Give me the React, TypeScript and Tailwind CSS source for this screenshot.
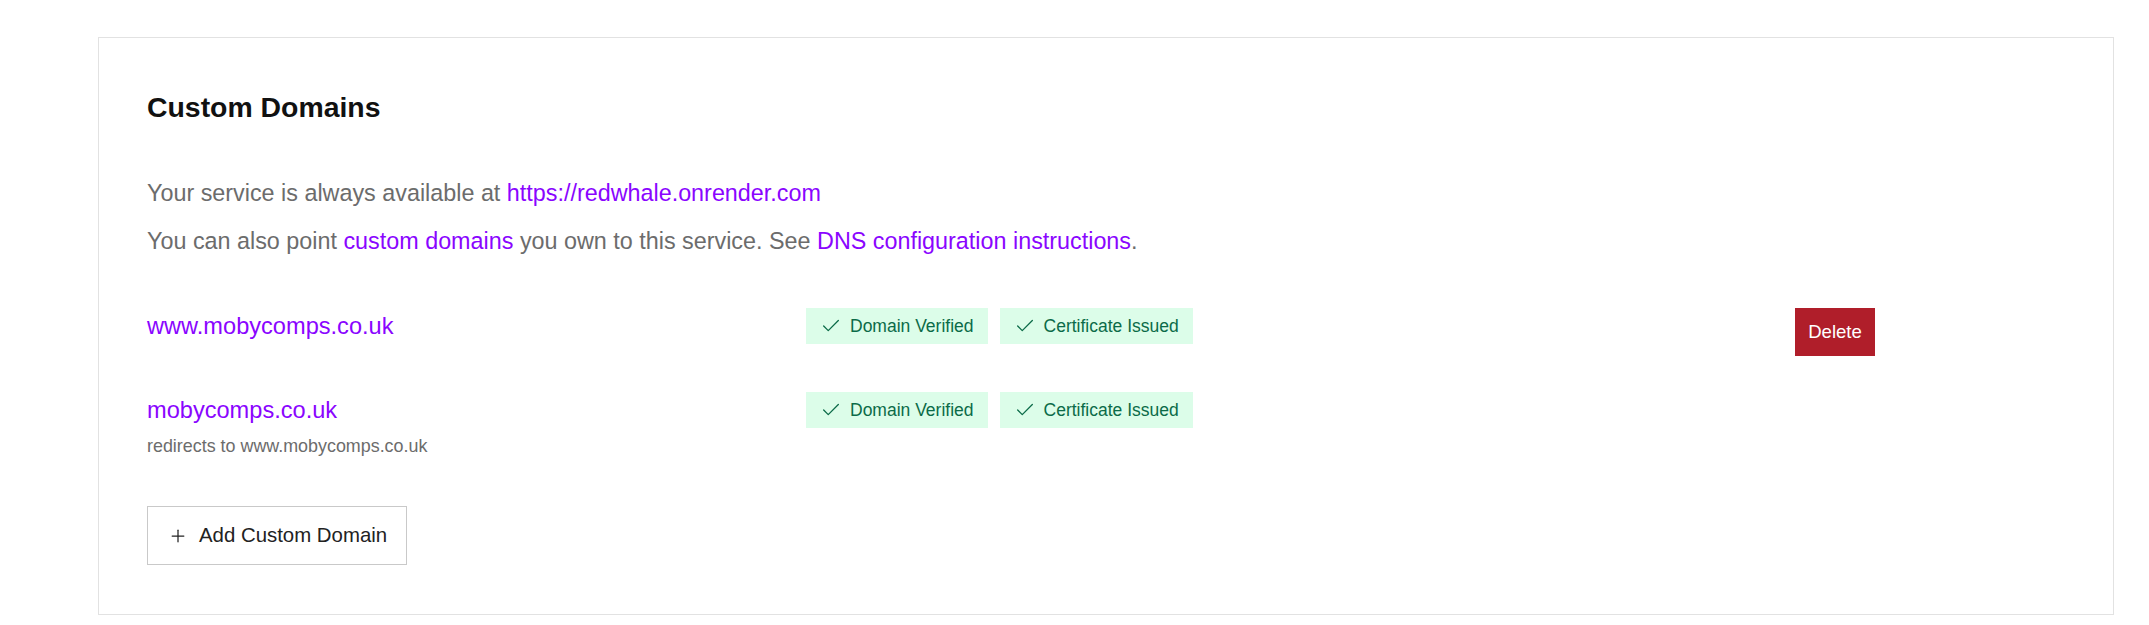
import { Check, Plus } from 'lucide-react';

const domains = [
  { name: 'www.mobycomps.co.uk', redirect: null, canDelete: true },
  { name: 'mobycomps.co.uk', redirect: 'www.mobycomps.co.uk', canDelete: false },
];

function Badge({ label }: { label: string }) {
  return (
    <span className="flex items-center h-[36px] pl-[14px] pr-[14px] bg-[#dcfde9] text-[#0b6b48] text-[17.5px]">
      <Check size={22} strokeWidth={1.4} className="mr-[8px]" />
      {label}
    </span>
  );
}

export default function App() {
  return (
    <div className="min-h-screen bg-white pl-[98px] pt-[37px] font-['Liberation_Sans',Arial,sans-serif]">
      <section className="w-[2016px] border border-[#e2e2e2] pl-[48px] pr-[49px] pt-[49px] pb-[49px]">
        <h2 className="text-[28.4px] leading-[40px] font-bold text-[#111111]">Custom Domains</h2>

        <div className="mt-[42px] text-[23.35px] leading-[48px] text-[#6c6c6c]">
          <p>
            Your service is always available at{' '}
            <a className="text-[#8a05ff]">https://redwhale.onrender.com</a>
          </p>
          <p>
            You can also point <a className="text-[#8a05ff]">custom domains</a> you own to this service. See{' '}
            <a className="text-[#8a05ff]">DNS configuration instructions</a>.
          </p>
        </div>

        {/* Domain rows */}
        <div className="mt-[43px] flex flex-col gap-[36px]">
          {domains.map((d) => (
            <div key={d.name} className="grid grid-cols-[659px_989px_1fr] items-start">
              <div>
                <div className="text-[23.6px] leading-[36px] text-[#8a05ff]">{d.name}</div>
                {d.redirect && (
                  <div className="mt-[6px] text-[17.9px] leading-[24px] text-[#6c6c6c]">
                    redirects to {d.redirect}
                  </div>
                )}
              </div>
              <div className="flex gap-[12px]">
                <Badge label="Domain Verified" />
                <Badge label="Certificate Issued" />
              </div>
              <div>
                {d.canDelete && (
                  <button className="w-[80px] h-[48px] bg-[#b01e2a] text-white text-[18.6px] flex items-center justify-center">
                    Delete
                  </button>
                )}
              </div>
            </div>
          ))}
        </div>

        <button className="mt-[48px] w-[260px] h-[59px] border border-[#c9c9c9] flex items-center pl-[20px] text-[20.4px] text-[#222222]">
          <Plus size={20} strokeWidth={1.5} className="mr-[11px]" />
          Add Custom Domain
        </button>
      </section>
    </div>
  );
}
